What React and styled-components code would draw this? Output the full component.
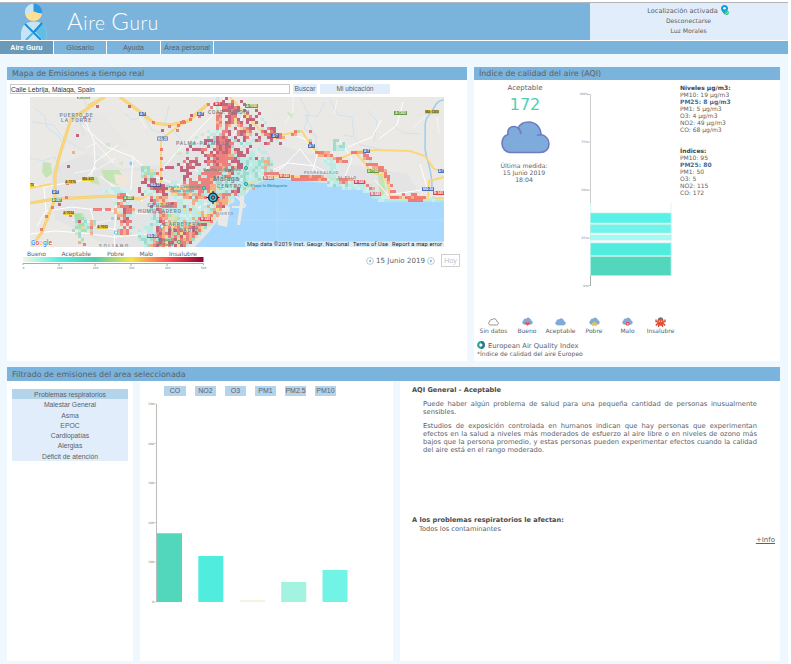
import React from "react";
import styled, { createGlobalStyle, css } from "styled-components";

const Global = createGlobalStyle`
  * { box-sizing: border-box; }
  body { margin: 0; background: #fff; font-family: "DejaVu Sans", sans-serif; color: #5c6166; overflow: hidden; }
  svg { display: block; flex: none; }
  button, input { font-family: "Liberation Sans", sans-serif; padding: 0; margin: 0; border: 0; color: #5c6166; }
  p, h1, h2, h3 { margin: 0; font-weight: normal; }
`;

const Page = styled.div`
  width: 788px;
  height: 664px;
  background: #eff7ff;
  border-top: 2px solid #fff;
`;
const Header = styled.header`
  display: flex;
  height: 39px;
  border-top: 1px solid #b3b4b8;
  border-bottom: 1px solid #fff;
  background: #7ab3dc;
`;
const Brand = styled.div`
  display: flex;
  flex: 1;
  padding-left: 20px;
`;
const BrandName = styled.h1`
  font: 300 19px/35px Lato, sans-serif;
  letter-spacing: 0.6px;
  color: #fff;
  margin-left: 20px;

  &::first-letter { font-size: 24px; }
`;
const BrandCapital = styled.span`
  font-size: 24px;
`;
const Account = styled.div`
  width: 198px;
  background: #e1edfa;
  text-align: center;
  line-height: 10px;
  padding: 2px 22px 0 0;
`;
const AccountLine = styled.div`
  display: flex;
  justify-content: center;
  gap: 3px;
  height: 10px;
  font-size: ${(p) => (p.$big ? "6.6px" : "6.1px")};
  line-height: ${(p) => (p.$big ? "12px" : "11px")};
  padding-left: ${(p) => (p.$big ? "20px" : "21px")};
  white-space: nowrap;
`;
const Nav = styled.nav`
  display: flex;
  height: 13px;
  background: #7ab3dc;
  margin-bottom: 13px;
`;
const NavItem = styled.a`
  width: ${(p) => p.$w}px;
  border-right: 1px solid #fff;
  text-align: center;
  font-family: "Liberation Sans", sans-serif;
  font-size: 7.4px;
  line-height: 13px;
  white-space: nowrap;
  ${(p) => p.$active && css`
    background: #6b99b8;
    color: #fff;
    font-weight: bold;
    font-size: 7px;
  `}
`;
const TopRow = styled.div`
  display: flex;
  gap: 7px;
  padding-left: 7px;
  height: 294px;
`;
const Panel = styled.section`
  width: ${(p) => p.$w}px;
  background: #fff;
`;
const PanelTitle = styled.h2`
  height: ${(p) => p.$h || 13}px;
  padding-left: 5px;
  background: #7ab3dc;
  font-size: 7.95px;
  line-height: ${(p) => (p.$h || 13) + 1}px;
  white-space: nowrap;
`;
const SearchRow = styled.div`
  display: flex;
  gap: 3px;
  padding: 4px 0 0 3px;
  height: 17px;
`;
const SearchInput = styled.input`
  width: 280px;
  height: 10px;
  border: 1px solid #c9c9c9;
  font-size: 6.7px;
  color: #333;
  background: #fff;
`;
const SoftButton = styled.button`
  width: ${(p) => p.$w}px;
  height: 10px;
  background: ${(p) => (p.$strong ? "#b4d4ec" : "#e1edfa")};
  font-size: ${(p) => (p.$strong ? 7 : 6.7)}px;
  line-height: 10px;
  white-space: nowrap;
`;
const MapFrame = styled.div`
  padding-left: 23px;
`;
const ScaleRow = styled.div`
  display: flex;
  justify-content: space-between;
  padding: 3px 7px 0 12px;
`;
const DatePicker = styled.div`
  display: flex;
  align-items: center;
  gap: 2px;
  height: 13px;
  margin-top: 4px;
  font-size: 7.1px;
  white-space: nowrap;
`;
const TodayButton = styled.button`
  width: 19px;
  height: 13px;
  border: 1px solid #cfcfcf;
  background: #fff;
  color: #c4c4c4;
  font-size: 7px;
  line-height: 11px;
  margin-left: 4px;
`;
const AqiBody = styled.div`
  display: flex;
  height: 236px;
`;
const Current = styled.div`
  width: 102px;
  display: flex;
  flex-direction: column;
  align-items: center;
  padding-top: 4px;
  font-size: 7px;
  line-height: 9px;
`;
const Score = styled.div`
  color: #50ceb6;
  font-size: 16px;
  line-height: 20px;
  margin: 2px 0 6px;
`;
const Measured = styled.div`
  margin: 8px 2px 0 0;
  text-align: center;
  font-size: 6.15px;
  line-height: 7px;
  white-space: nowrap;
`;
const ChartSlot = styled.div`
  padding-top: 8px;
  margin-left: 1px;
`;
const Levels = styled.div`
  padding: 4px 0 0 8px;
  font-size: 6px;
  line-height: 7px;
  white-space: nowrap;
`;
const Level = styled.div`
  ${(p) => p.$head && css`font-weight: bold; color: #454545;`}
  ${(p) => p.$main && css`font-weight: bold; color: #3f6b98;`}
  ${(p) => p.$gap && css`margin-top: 14px;`}
`;
const Categories = styled.div`
  display: grid;
  grid-template-columns: 29px 38px 29px 38px 29px 37px;
  padding-left: 5px;
  height: 25px;
  padding-top: 1px;
`;
const Category = styled.div`
  display: flex;
  flex-direction: column;
  align-items: center;
  gap: 0;
  font-size: 6px;
  line-height: 8px;
  white-space: nowrap;
`;
const Source = styled.div`
  display: flex;
  gap: 3px;
  padding-left: 3px;
  height: 9px;
  font-size: 6.75px;
  line-height: 11px;
`;
const SourceNote = styled.div`
  padding-left: 3px;
  font-size: 6.05px;
  line-height: 8px;
`;
const FilterArea = styled.section`
  width: 773px;
  margin: 6px 0 0 7px;
`;
const FilterRow = styled.div`
  display: flex;
  gap: 7px;
`;
const Box = styled.div`
  width: ${(p) => p.$w}px;
  height: 280px;
  background: #fff;
`;
const Menu = styled.div`
  margin: 8px 5px;
  background: #e1edfa;
`;
const MenuItem = styled.div`
  height: 10.3px;
  background: ${(p) => (p.$active ? "#b4d4ec" : "transparent")};
  text-align: center;
  font: 6.8px/12px "Liberation Sans", sans-serif;
`;
const Tags = styled.div`
  display: flex;
  gap: 9px;
  padding: 5px 0 0 24px;
  height: 19px;
`;
const InfoBox = styled(Box)`
  padding: 5px 5px 0 12px;
  font-size: 7px;
  line-height: 8px;
`;
const InfoTitle = styled.h3`
  font-weight: bold;
  font-size: 6.6px;
  line-height: 9px;
  color: #4c4c4c;
  white-space: nowrap;
`;
const Paragraph = styled.p`
  width: 334px;
  margin: ${(p) => p.$top}px 0 0 11px;
  font-size: 6.75px;
  text-align: justify;
`;
const Affected = styled.div`
  margin-top: 62px;
`;
const AffectedText = styled.p`
  padding-left: 7px;
  font-size: 6.65px;
  line-height: 9px;
`;
const MoreLink = styled.a`
  display: block;
  text-align: right;
  text-decoration: underline;
  line-height: 10px;
  margin-top: 1px;
`;

const Logo = () => (
  <svg width="27" height="37" viewBox="0 0 27 37">
    <circle cx="13.500" cy="9" r="8.600" fill="#c8e6f6" />
    <path d="M13.500 .4a8.600 8.600 0 0 1 8.600 8.600h-4z" fill="#2c9ade" />
    <path d="M13.500 .4v9l8.600 1V9A8.600 8.600 0 0 0 13.500 .4z" fill="#2c9ade" />
    <path d="M5.200 11.500L14 8.500l7.800 3A8.600 8.600 0 0 1 5.200 11.500z" fill="#fde096" />
    <path d="M1 37V31C1 22 7 18.500 14 18.500S26.500 22 26.500 31v6z" fill="#c5e5f6" />
    <path d="M14 27l8-7c3 3 4.500 7 4.500 11v6h-4z" fill="#60bde5" />
    <path d="M5 21l16 16M22 20L14 29" stroke="#1c8ed2" strokeWidth="2" fill="none" />
    <path d="M13 30L6 37" stroke="#57b2df" strokeWidth="2" />
  </svg>
);

const PinIcon = () => (
  <svg width="8" height="11" viewBox="0 0 8 11">
    <path d="M3.500 0C1.500 0 0 1.500 0 3.300 0 5.500 3.500 9.500 3.500 9.500S7 5.500 7 3.300C7 1.500 5.500 0 3.500 0z" fill="#149bd8" />
    <circle cx="3.500" cy="3.300" r="1.300" fill="#fff" />
    <circle cx="5.700" cy="7.800" r="2.200" fill="#35c786" />
    <path d="M4.700 7.800l.8.8 1.300-1.500" stroke="#fff" strokeWidth=".5" fill="none" />
  </svg>
);

const CELL_COLORS = {
  m: "#b8435f", r: "#ed6460", o: "#f5a070", y: "#f1dc79",
  g: "#a6dda5", t: "#8bd9c9", c: "#b5ece3", b: "#cdf3f0",
};

// Emission cells on a 3px grid: [first row, first column, rows of cells].
const CELL_BLOCKS = [
  [0, 40, [
    "......................c..m.................",
    "......................c.m..r..m............",
    ".....................rc.mmrm...m...........",
    "....................r.c.rrmmrm.............",
    "......................y.mmmrmm.m...m.......",
    "......................or..rmm...r..........",
    "................r.....rr.mmrr..m.r.m.......",
    ".............r........ro..mr......m..c.....",
    "..........rr..........or.mmr.m..m..m..c....",
    ".........r............ro.ro..........m.....",
    "......................rc.r..m.r...m..c.r...",
    "...................c.bc.rrm..rmmc....r.....",
    ".................c..cc.tr.m..r.....m.r.....",
    "...............c...t.tmrmr.cm..mr...m......",
    "..................mmmtmrrmmctm.m..cmr......",
    "..............t..cm.c.mrrmrr..t.cc....m....",
    ".............m.....mc.rmrmmt...c.m.........",
    "............m.mmmrr..mrmrmrcmm..m..bc......",
    "............t....m..m.mrmmrcomm.mccb.cc....",
    "..................mrrmrrrroocmmm.cc........",
    "............m..r...mcrmrrrrrmtccctcm.......",
    "...........r.mmm..mrrmrrrr.mmmcctcct.......",
    ".........m..mr.mm..rcrmorrrc.mmcttcbb.t....",
    ".....mmm..m.mmm.....rrrrorcmommccbccb......",
    "..........mmm...c.rrrrroormrccctccctc......",
    "............mm..crrrrrrrccomctcttcbtc......",
    ".m.........mm...rccrrroctrrcccttctcc.......",
    "m..........m.r..rrrrorccccttctbtccccc......",
    ".......cc..r.rrrcrrrrcttctccccctc.cc.......",
    "..mmm.c.c..oorrrrrrroocccttcobcctt.........",
    "rommmm.r..oyorrrrrrrooytcbcctmctcco........",
    "ccmrm..ootcotoccrrcryoccctcmrmcc...........",
    ".cc.mm.yyooroyoortccyygorrrcr.cc...........",
    "rcoroo.bcb.oorcroorcyortrocc...............",
    "mroyrc...ccb.booccbcyrroooy................",
    ".rcyoormrccbb.obcc.ccyoroo.................",
    "m.ogrrrrrccrcbc..ccobcrrm..................",
    "tcmrc.cccccycrccbc.ctoyo...................",
    "co.roc..cccccyccyobcyry....................",
    ".t.orogyccbbcbcccoyorco....................",
    "ctcrooccygccbcocrctoyy.....................",
    "b.tmr.oygccocccotggtr......................",
    "tcc.mcygctcotyytrmmyc......................",
  ]],
  [43, 34, [
    "....ccc.mroyryorgoormroyt",
    "..c.bcc.mrocmymrroycmory",
    "..bb.cccrmormogrymrormt",
    "..tcct.tmroyrtrgmyrory",
    "..cttctocmrggrmyrorot",
    "....tccormrymmgyrrom",
    "....ctormoryrcmymrc",
  ]],
  [23, 35, ["..tgt.", "..tctyc", "..cgtgtr", "..goctc", "...mg.m", "..mm.mm", "....mrm", ".m..c.m", ".m.cbb.", "..mbccb"]],
  [30, 22, ["....bcccbb", "..bcbbcccbbb", ".......orr..", ".......rrr..", "........cr..", "............", "........mro.", "............"]],
  [35, 27, [".cro.cbb", "..or.rm.", ".ob.mrro", ".oycmrrc", "..oorccb", "t.rcrm..", "...rmrr.", "..bo.r..", "...br.rc", "..oror..", "..trorc."]],
  [37, 21, ["rrr.rr"]],
  [39, 14, [".gg....", ".gggc..", ".tmct.ot", ".cgtccog", ".tgyctr.", "t.cgg.t.", ".yt...o.", "..t.....", "...g....", "..oc...."]],
  [38, 11, ["rrr", "..r"]],
  [5, 72, ["....m.", "...m..", ".m...."]],
  [7, 68, ["ym..m..", "yrm.m..", ".or..m.", "..yorm.", "...mor.", "..mryt."]],
  [10, 77, ["...mm....", ".m.rm....", "yrrmrmr..", "..mmyrro.", "...m.c...", ".mr...m.."]],
  [11, 86, ["..rg...r", ".ro.....", "........", ".......t", ".......m", ".......r"]],
  [18, 95, [
    "rrroo...........",
    ".ooror..........",
    "......orr.......",
    "......rrorr.....",
  ]],
  [14, 101, ["tt..", "t..t", "tctt", "tccc"]],
  [20, 97, ["..cc", "bcbcb", ".bcccb", "..bccb", "...cbb", "..ccb", "..cb"]],
  [18, 107, ["rroor", "....rr", "....orr", "......c", ".....rrrr", ".......oorr", "........orro", "..........yr", "...........rr", "............r", "............o", ".............r", "............y", ".............rr"]],
  [20, 73, [
    "....tct.",
    "..cttooc",
    "bcctctot",
    "cctctoc.",
    ".tccbtct",
    "cctbcrrrrr....",
    "bctcbo....rrr.r..rrrorrro..cc",
    "ccctc.........rrrrrrrrrorrbcctrrroo",
    "..........................tbccorobcrrro",
    "..........................bbtccbtccbcccrc",
    "...............................bcbccbccbro",
    "......................................bbcc",
  ]],
  [32, 114, ["bb........r..rr..", "cccbb.rrro.rrorrrr.bc", "..bbccccccccrrrrrcccbccc"]],
];

const ROUTE_CELLS = [
  [67, 9, "m"], [54, 20, "r"], [47, 38, "m"], [43, 55, "o"], [38, 69, "m"], [37, 86, "r"], [36, 100, "r"], [29, 107, "m"],
  [22, 110, "r"], [16, 119, "r"], [11, 132, "r"], [99, 9, "m"], [123, 25, "r"], [139, 29, "r"], [147, 33, "r"], [153, 24, "r"],
  [161, 18, "m"], [178, 7, "r"], [132, 33, "m"], [131, 52, "r"], [131, 61, "r"], [131, 72, "r"], [131, 81, "m"], [54, 147, "r"],
];

const ROAD = { fill: "#fbd67a", edge: "#efcd78" };

const RoadBadge = ({ x, y, w, color, ink = "#fff", children }) => (
  <g>
    <rect x={x} y={y} width={w} height="4" rx=".6" fill={color} />
    <text x={x + w / 2} y={y + 3.3} fontSize="3.200" fontWeight="bold" textAnchor="middle" fill={ink}>{children}</text>
  </g>
);

const MAP_LABELS = [
  [46, 19.5, "PUERTO DE", 33], [46, 25, "LA TORRE", 30], [198.5, 17, "CDAD. JARDÍN", 41], [172.5, 47.5, "PALMA-PALMILLA", 53],
  [130, 110, "CRUZ DE", 25], [129.5, 115.5, "HUMILLADERO", 43], [152, 129, "CARRETERA", 35], [153, 134.5, "DE CÁDIZ", 29],
  [199, 91, "CENTRO", 24],
];

const EmissionMap = () => (
  <svg width="414" height="150" viewBox="0 0 414 150" fontFamily="Roboto, sans-serif">
    <rect width="414" height="150" fill="#ebe9e5" />
    <g fill="#e4e4e4">
      <path d="M20 72L60 55L92 72L128 68L180 42L218 12L250 48L310 66L378 77L390 99L320 105L245 95L218 92L180 150L80 150L25 122z" />
      <path d="M50 14l26 6 23 30-36 10-29-13zM80 74h52v28H80z" fill="#e8e7e6" />
    </g>
    <g fill="#c5e4b5">
      <path d="M13 65l8 1 1 11-6 4-4-6zM56 79l11 1 3 8-9-2zM71 73h18l7 11-9 4-12-5zM43 116h10l5 13-6 5-6-8zM257 15l6 2-2 4zM348 77l5 2 3 15-5 6-2-9z" />
      <path d="M75 46h5v4h-5zM88 67l5-3v4zM146 54l6 1v3h-7z" opacity=".6" />
    </g>
    <path d="M84 77l14 2-2 10-10-2z" fill="#f1e7d8" />
    <g fill="none" stroke="#c5def0" strokeWidth=".7">
      <path d="M5 12l10 7 2 12 12 8 6 12M54 0l3 15-8 6 5 19M94 16l9 7 11-4 8 14 13 4M139 8l-4 18 16 16M270 0l9 18-5 14 14 8M300 3l8 15 14 2 2 20M338 14l9 10-3 21M363 28l10 8 18 1M230 45l10 16-4 25M0 61l13 3 12-4 5 15M295 5l-8 15-12-2 10 20 2 15M350 52l-20-4-6-8-10-2M2 25l22 3 9 13 18 11M72 101l15-4 18 5" />
      <path d="M414 3c-9 0-9 9-15 15s-3 15-4 29 7 20 7 43" stroke="#9ccdf3" strokeWidth="1.500" />
    </g>
    <circle cx="101.500" cy="66.500" r="2" fill="#8ac4fb" />
    <path d="M165 150L180 134L190 120L200 107L214 100L222 90L232 84L245 81L262 83L296 86L318 91L338 94L346 101L362 103L390 104L414 103V150z" fill="#a9d8fe" />
    <path d="M220 78l-15 17-1 9 15 3 4-6-8-3z" fill="#a9d8fe" />
    <path d="M187 108l13 2-3 20-9-2zM209 93l6-5-1 16-4 24h-3l3-22z" fill="#ebe9e5" />
    <path d="M202 95l14 14M202 110h13" stroke="#ebe9e5" strokeWidth="2" />
    <g fill="none" stroke="#fff" strokeWidth="1">
      <path d="M52 16l12 28 1 22-5 16M52 28l25 22 26 10 22 20 25 8M103 60l-2 32-15 16-2 43M64 66l24-18M70 79l23 17 20 8M0 87l14 3 40-7 12-13M14 90l2 24-9 15M60 111l5 17 22 5 9 4M0 137l25-3 28 2 31 4 46-4 42-27 34-17M17 114l25-4 26 3 50 4M130 75l15-18 37-38 6-19M154 67l18 9 25-24 17-35M194 0l-6 33 8 26 4 34M218 84l40-18 27 3 26 14 12-4M264 38l11 4 12 16-6 21M318 50l24-10 9-17M373 5l-6 23-18 14M390 67l7 24M232 84l22-15 16-17 17 22-4 7M310 44l12 18-7 17M345 83l13 15 33-5" />
      <path d="M44 76l24-4 18-11M56 51l10-5 18 20M42 123l25 3 17-4M109 18l7 13M176 80l-4 31-13 13M150 86l11-15M263 0v14l-8 12M307 3l-3 15M395 19l-12 12M407 20l2 16" strokeWidth=".6" />
      <path d="M117 0V150M247 0V150M0 18H414M0 123H414" stroke="#d9e8f0" strokeWidth=".5" opacity=".5" />
    </g>
    <g fill="none" stroke={ROAD.edge} strokeWidth="3">
      <path d="M71 2L57 12L41 22L30 57L25 77L25 102L12 135L2 149M0 106L25 102L80 99L111 102M90 0L109 14L124 26L140 28L158 24L178 7M75 0L58 9" />
    </g>
    <g fill="none" stroke={ROAD.fill} strokeWidth="2">
      <path d="M71 2L57 12L41 22L30 57L25 77L25 102L12 135L2 149M0 106L25 102L80 99L111 102M90 0L109 14L124 26L140 28L158 24L178 7M75 0L58 9M131 90V42L149 29L163 20M0 91L22 87M111 102L127 93L150 92M200 0L216 18L230 33L244 39L262 36L272 34L281 49L288 56L307 63L325 55L335 66L341 75L354 79L359 90L360 99L384 102L414 101M325 55L346 53L380 54L395 59L404 72L414 75M398 102L399 84L414 80M211 96L222 85L241 79L275 80L310 82" />
    </g>
    <g opacity=".78" shapeRendering="crispEdges">
      {CELL_BLOCKS.map(([row, col, lines]) =>
        lines.map((line, i) =>
          [...line].map((key, j) =>
            CELL_COLORS[key] ? (
              <rect key={`${row}-${col}-${i}-${j}`} x={(col + j) * 3} y={(row + i) * 3} width="3" height="3" fill={CELL_COLORS[key]} />
            ) : null
          )
        )
      )}
      {ROUTE_CELLS.map(([x, y, key]) => (
        <rect key={`${x}-${y}`} x={x - 1} y={y - 1} width="3" height="3" fill={CELL_COLORS[key]} />
      ))}
    </g>
    <g fontSize="5" fontWeight="500" fill="#71818f" textAnchor="middle">
      {MAP_LABELS.map(([x, y, label, w]) => (
        <text key={label} x={x} y={y} textLength={w}>{label}</text>
      ))}
      <text x="196" y="84" fontSize="7.500" textLength="26">Málaga</text>
      <text x="194" y="118" fontSize="4" textLength="18" fill="#8295af">PUERTO</text>
      <text x="291" y="77" fontSize="4" textLength="34" fill="#818999">PEDREGALEJO</text>
      <text x="317" y="82" fontSize="4" textLength="18" fill="#818999">EL PALO</text>
      <text x="83.500" y="151" fontSize="4.500" textLength="29">SOLIANO</text>
      <text x="239" y="90" fontSize="4.200" textLength="36" fill="#3d9a9d">Playa la Malagueta</text>
      <text x="192" y="73.500" fontSize="4" textLength="38" fill="#3d9a9d">Castillo de Gibralfaro</text>
      <text x="153" y="91" fontSize="3.800" textLength="34" fill="#4da09a">Centro Comercial</text>
      <text x="152" y="95" fontSize="3.800" textLength="24" fill="#4da09a">Larios Centro</text>
      <text x="134" y="144" fontSize="4" fill="#3f9673">Parque</text>
      <text x="135" y="148.500" fontSize="4" fill="#3f9673">del Oeste</text>
    </g>
    <RoadBadge x={109} y={15} w={7} color="#4d70b8">A-7</RoadBadge>
    <RoadBadge x={167} y={15} w={7} color="#4d70b8">A-7</RoadBadge>
    <RoadBadge x={127} y={39.5} w={11} color="#4d70b8">MA-20</RoadBadge>
    <RoadBadge x={22} y={93} w={7} color="#4d70b8">A-7</RoadBadge>
    <RoadBadge x={120} y={86} w={11} color="#59528e">MA-21</RoadBadge>
    <RoadBadge x={117} y={137} w={11} color="#4d70b8">MA-20</RoadBadge>
    <RoadBadge x={241} y={37} w={8} color="#4d5cab">A-7</RoadBadge>
    <RoadBadge x={278} y={47} w={7} color="#4d70b8">A-7</RoadBadge>
    <RoadBadge x={333} y={52} w={7} color="#4d70b8">A-7</RoadBadge>
    <RoadBadge x={392} y={90} w={12} color="#4d70b8">MA-24</RoadBadge>
    <RoadBadge x={408} y={72} w={6} color="#4d70b8">A-7</RoadBadge>
    <RoadBadge x={47} y={-2.5} w={13} color="#669a43">A-7075</RoadBadge>
    <RoadBadge x={22} y={101} w={10} color="#669a43">A-357</RoadBadge>
    <RoadBadge x={93} y={99} w={11} color="#669a43">A-357</RoadBadge>
    <RoadBadge x={215} y={7} w={13} color="#669a43">A-7000</RoadBadge>
    <RoadBadge x={364} y={14} w={13} color="#669a43">A-7203</RoadBadge>
    <RoadBadge x={337} y={72} w={12} color="#669a43">A-7102</RoadBadge>
    <RoadBadge x={0} y={86} w={4} color="#edce31" ink="#444">75</RoadBadge>
    <RoadBadge x={35} y={83} w={11} color="#edce31" ink="#444">A-7076</RoadBadge>
    <RoadBadge x={52} y={80} w={12} color="#edce31" ink="#444">MA-405</RoadBadge>
    <RoadBadge x={33} y={114} w={11} color="#edce31" ink="#444">A-7054</RoadBadge>
    <RoadBadge x={67} y={128} w={11} color="#edce31" ink="#444">A-7052</RoadBadge>
    <RoadBadge x={395} y={13} w={14} color="#edce31" ink="#444">MA-3200</RoadBadge>
    <RoadBadge x={184} y={5} w={8} color="#dc4147">N-1</RoadBadge>
    <RoadBadge x={170} y={120} w={11} color="#dc4147">N-340</RoadBadge>
    <RoadBadge x={233} y={79} w={11} color="#d66a6d">N-340</RoadBadge>
    <RoadBadge x={249} y={77} w={11} color="#dc5350">N-340</RoadBadge>
    <RoadBadge x={324} y={83} w={11} color="#dc4147">N-340</RoadBadge>
    <RoadBadge x={340} y={95} w={11} color="#d66a6d">N-340</RoadBadge>
    <RoadBadge x={403} y={94} w={11} color="#dc4147">N-340</RoadBadge>
    <g fill="#79cfcd" stroke="#25a6a6" strokeWidth="1">
      <circle cx="174" cy="91" r="1.600" /><circle cx="216" cy="71" r="1.600" /><circle cx="216" cy="87" r="1.600" />
      <circle cx="149" cy="145" r="1.600" fill="#bce4ae" stroke="#5aaa69" />
      <path d="M130.500 128h3v3h-3zM84.500 134h3v3h-3z" stroke="#62c9e8" fill="#fff" />
    </g>
    <g>
      <path d="M183 94v13M176.500 100.500h13" stroke="#15334a" strokeWidth="1.200" />
      <circle cx="183" cy="100.500" r="4.300" fill="#40c5df" stroke="#15334a" strokeWidth="1.500" />
      <circle cx="183" cy="100.500" r="1.700" fill="#e07672" stroke="#15334a" strokeWidth="1" />
    </g>
    <text y="147.500" fontSize="6.600" fontWeight="500" stroke="#fff" strokeWidth=".7" paintOrder="stroke">
      <tspan x="1" fill="#4285f4">G</tspan><tspan fill="#ea4335">o</tspan><tspan fill="#fbbc05">o</tspan><tspan fill="#4285f4">g</tspan><tspan fill="#34a853">l</tspan><tspan fill="#ea4335">e</tspan>
    </text>
    <rect x="215" y="144.500" width="199" height="5.500" fill="#e5f0f5" opacity=".85" />
    <g fontSize="5.700" fill="#222">
      <text x="217" y="149" textLength="102">Map data ©2019 Inst. Geogr. Nacional</text>
      <text x="323" y="149" textLength="35">Terms of Use</text>
      <text x="362" y="149" textLength="50">Report a map error</text>
    </g>
  </svg>
);

const ColorScale = () => (
  <svg width="190" height="24" viewBox="19 0 190 24" fontSize="6">
    <defs>
      <linearGradient id="air-scale">
        <stop offset="0" stopColor="#f0f8df" /><stop offset=".2" stopColor="#50efe0" /><stop offset=".4" stopColor="#50ccaa" />
        <stop offset=".6" stopColor="#f0e641" /><stop offset=".8" stopColor="#ff5050" /><stop offset="1" stopColor="#960032" />
      </linearGradient>
    </defs>
    <g fill="#5c6166">
      {[[27, "Bueno", 19], [61.5, "Aceptable", 29.5], [107, "Pobre", 17], [139.5, "Malo", 13.5], [169, "Insalubre", 28]].map(([x, t, w]) => (
        <text key={t} x={x} y="6" textLength={w}>{t}</text>
      ))}
    </g>
    <rect x="23" y="7" width="180.500" height="5" fill="url(#air-scale)" />
    <path d="M23 15v-1.500h180.500V15M59 14v2M95 14v2M131 14v2M167 14v2" fill="none" stroke="#aaa" />
    <g fontSize="3" fill="#777" textAnchor="middle">
      {[0, 100, 200, 300, 400, 500].map((n, i) => <text key={n} x={23.5 + i * 36} y="19">{n}</text>)}
    </g>
  </svg>
);

const Arrow = ({ flip }) => (
  <svg width="8" height="8" viewBox="0 0 8 8">
    <circle cx="4" cy="4" r="3.400" fill="#fff" stroke="#a5b2ba" strokeWidth=".7" />
    <path d={flip ? "M3.400 2.500L5 4L3.400 5.500z" : "M4.600 2.500L3 4L4.600 5.500z"} fill="#2697d4" />
  </svg>
);

const CLOUD = "M10 31.500C4.500 31.500 1 27.500 1 22.500C1 18 3.500 14.500 7 13.500C6 8.500 9 5.500 13 5.500C15 5.500 16 6 17 7C19 3 23 1 27.500 1C34.500 1 39.500 6 40 13.500C44.500 14.500 48 18 48 23C48 28 44.500 31.500 39 31.500z";

const BigCloud = () => (
  <svg width="49" height="33" viewBox="0 0 49 33">
    <path d={CLOUD} fill="#7fabdc" stroke="#707dbd" strokeWidth="1.600" />
    <path d="M17 7c2 1.500 3 3 2.800 6M36 14.500c1.500-.9 3-.8 4-.8" fill="none" stroke="#707dbd" strokeWidth="1.600" />
  </svg>
);

const CategoryIcon = ({ kind }) => (
  <svg width="11" height="10" viewBox="0 0 11 10">
    {kind !== "crab" && (
      <g transform={kind === "none" || kind === "plain" ? "translate(.5 1.500) scale(.205)" : "translate(.5 .8) scale(.205)"}>
        <path d={CLOUD} fill={kind === "none" ? "#fff" : "#7fabdc"} stroke={kind === "none" ? "#555" : "#749bd0"} strokeWidth="3" />
      </g>
    )}
    {kind === "heart" && <path d="M5.500 8.700L3 6.500q0-1.500 1.300-1.500.8 0 1.200.6.400-.6 1.200-.6Q8 5 8 6.500z" fill="#ef5351" />}
    {kind === "star" && <path d="M5.500 4l1.200 1.600 1.800.3-1 1.500.3 1.800-2.300-.7-2.300.7.3-1.800-1-1.500 1.800-.3z" fill="#e8c440" />}
    {kind === "ring" && <circle cx="5.600" cy="6.800" r="1.500" fill="#f6c9cf" stroke="#e4474b" strokeWidth="1.100" />}
    {kind === "crab" && (
      <g>
        <path d="M2.500 3Q3 .5 5.500 .2T8.500 3z" fill="#707477" />
        <rect x="2.200" y="2.600" width="6.600" height="6.200" rx="2" fill="#e25235" />
        <path d="M2.500 4.500H1V2.500M8.500 4.500H10V2.500M2.500 6.500L.8 8.500M8.500 6.500l1.700 2M3.500 8v2M7.500 8v2" stroke="#d84935" strokeWidth="1.300" fill="none" />
        <path d="M3.900 3.800h1v1h-1zM6.100 3.800h1v1h-1z" fill="#fff" />
      </g>
    )}
  </svg>
);

const IndexLogo = () => (
  <svg width="8" height="8" viewBox="0 0 8 8">
    <circle cx="4" cy="4" r="2.800" fill="#fff" stroke="#35a394" strokeWidth="2.200" />
    <path d="M4 1.200a2.800 2.800 0 0 1 0 5.600" fill="none" stroke="#287798" strokeWidth="2.200" />
  </svg>
);

const STACK = [
  [213, 10, "#57f1e7"], [224.5, 8.5, "#70f3ea"], [235, 5, "#a7faf3"], [243, 12.5, "#50eddf"], [256.5, 19, "#52d7bc"],
];

const StackChart = () => (
  <svg width="95" height="200" viewBox="577 88 95 200">
    <path d="M588 94.500h2.500v191H588M588 142h2M588 190h2M588 238h2" fill="none" stroke="#ccc" strokeWidth="1" />
    <path d="M590.500 203v83M671 203v73" stroke="#d5faf5" strokeWidth="1" />
    <path d="M590.500 275v11" stroke="#999" strokeWidth=".8" />
    {STACK.map(([y, h, color]) => (
      <rect key={y} x="590.500" y={y} width="80.500" height={h} fill={color} stroke="#b6eee6" strokeWidth=".7" />
    ))}
    <g fontSize="3" fill="#777" textAnchor="end">
      {[["100%", 95], ["75%", 143], ["50%", 191], ["25%", 239], ["0%", 287]].map(([t, y]) => <text key={t} x="588" y={y}>{t}</text>)}
    </g>
  </svg>
);

const BARS = [
  [157, 533, "#52d7bc"], [198.3, 556, "#50eddf"], [240, 600, "#f0f5df"], [281.2, 582, "#a2f4e1"], [322.5, 570, "#71f3e5"],
];

const BarChart = () => (
  <svg width="253" height="206" viewBox="140 400 253 206">
    <path d="M156.500 404v198" stroke="#bbb" />
    <path d="M154 404h2.500M154 443.500h2M154 483h2M154 522.500h2M154 562h2M154 602h2" stroke="#bbb" strokeWidth=".7" />
    {BARS.map(([x, y, color]) => <rect key={x} x={x} y={y} width="25" height={602 - y} fill={color} />)}
    <path d="M157 533.500h25" stroke="#83e2cf" />
    <g fontSize="3" fill="#777" textAnchor="end">
      {[500, 400, 300, 200, 100, 0].map((n, i) => <text key={n} x="154" y={405 + i * 39.6}>{n}</text>)}
    </g>
  </svg>
);

const CATEGORIES = [["none", "Sin datos"], ["heart", "Bueno"], ["plain", "Aceptable"], ["star", "Pobre"], ["ring", "Malo"], ["crab", "Insalubre"]];
const DISEASES = ["Problemas respiratorios", "Malestar General", "Asma", "EPOC", "Cardiopatías", "Alergias", "Déficit de atención"];

export default function App() {
  return (
    <Page>
      <Global />
      <Header>
        <Brand>
          <Logo />
          <BrandName>Aire <BrandCapital>G</BrandCapital>uru</BrandName>
        </Brand>
        <Account>
          <AccountLine $big>Localización activada <PinIcon /></AccountLine>
          <AccountLine>Desconectarse</AccountLine>
          <AccountLine>Luz Morales</AccountLine>
        </Account>
      </Header>
      <Nav>
        <NavItem $w={54} $active>Aire Guru</NavItem>
        <NavItem $w={53}>Glosario</NavItem>
        <NavItem $w={54}>Ayuda</NavItem>
        <NavItem $w={53}>Área personal</NavItem>
      </Nav>
      <TopRow>
        <Panel $w={460}>
          <PanelTitle>Mapa de Emisiones a tiempo real</PanelTitle>
          <SearchRow>
            <SearchInput defaultValue="Calle Lebrija, Málaga, Spain" />
            <SoftButton $w={24}>Buscar</SoftButton>
            <SoftButton $w={70}>Mi ubicación</SoftButton>
          </SearchRow>
          <MapFrame><EmissionMap /></MapFrame>
          <ScaleRow>
            <ColorScale />
            <DatePicker>
              <Arrow />15 Junio 2019<Arrow flip />
              <TodayButton>Hoy</TodayButton>
            </DatePicker>
          </ScaleRow>
        </Panel>
        <Panel $w={306}>
          <PanelTitle>Índice de calidad del aire (AQI)</PanelTitle>
          <AqiBody>
            <Current>
              Aceptable
              <Score>172</Score>
              <BigCloud />
              <Measured>Última medida:<br />15 Junio 2019<br />18:04</Measured>
            </Current>
            <ChartSlot><StackChart /></ChartSlot>
            <Levels>
              <Level $head>Niveles µg/m3:</Level>
              <Level>PM10: 19 µg/m3</Level>
              <Level $main>PM25: 8 µg/m3</Level>
              <Level>PM1: 5 µg/m3</Level>
              <Level>O3: 4 µg/m3</Level>
              <Level>NO2: 49 µg/m3</Level>
              <Level>CO: 68 µg/m3</Level>
              <Level $head $gap>Índices:</Level>
              <Level>PM10: 95</Level>
              <Level $main>PM25: 80</Level>
              <Level>PM1: 50</Level>
              <Level>O3: 5</Level>
              <Level>NO2: 115</Level>
              <Level>CO: 172</Level>
            </Levels>
          </AqiBody>
          <Categories>
            {CATEGORIES.map(([kind, label]) => (
              <Category key={kind}><CategoryIcon kind={kind} />{label}</Category>
            ))}
          </Categories>
          <Source><IndexLogo />European Air Quality Index</Source>
          <SourceNote>*Índice de calidad del aire Europeo</SourceNote>
        </Panel>
      </TopRow>
      <FilterArea>
        <PanelTitle $h={14}>Filtrado de emisiones del area seleccionada</PanelTitle>
        <FilterRow>
          <Box $w={126}>
            <Menu>
              {DISEASES.map((d, i) => <MenuItem key={d} $active={i === 0}>{d}</MenuItem>)}
            </Menu>
          </Box>
          <Box $w={253}>
            <Tags>
              {["CO", "NO2", "O3", "PM1", "PM2.5", "PM10"].map((t, i) => (
                <SoftButton key={t} $strong $w={i === 0 ? 22 : 21}>{t}</SoftButton>
              ))}
            </Tags>
            <BarChart />
          </Box>
          <InfoBox $w={380}>
            <InfoTitle>AQI General - Aceptable</InfoTitle>
            <Paragraph $top={5}>Puede haber algún problema de salud para una pequeña cantidad de personas inusualmente sensibles.</Paragraph>
            <Paragraph $top={6}>Estudios de exposición controlada en humanos indican que hay personas que experimentan efectos en la salud a niveles más moderados de esfuerzo al aire libre o en niveles de ozono más bajos que la persona promedio, y estas personas pueden experimentar efectos cuando la calidad del aire está en el rango moderado.</Paragraph>
            <Affected>
              <InfoTitle>A los problemas respiratorios le afectan:</InfoTitle>
              <AffectedText>Todos los contaminantes</AffectedText>
              <MoreLink>+Info</MoreLink>
            </Affected>
          </InfoBox>
        </FilterRow>
      </FilterArea>
    </Page>
  );
}
